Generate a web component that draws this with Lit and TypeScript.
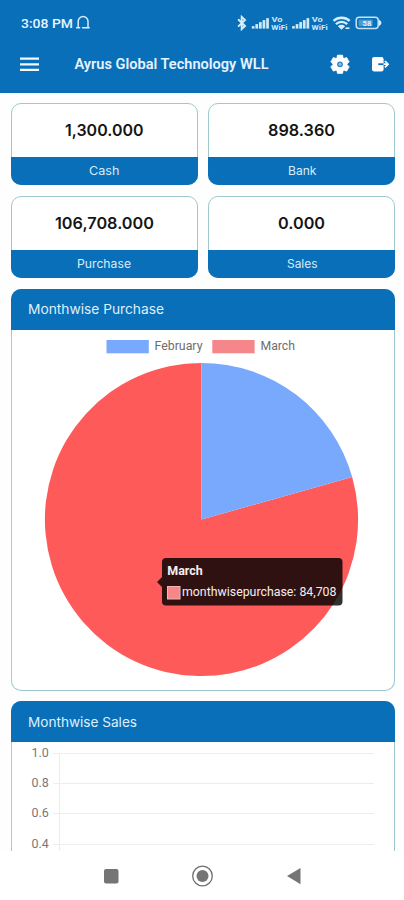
import { LitElement, html, svg, css } from "lit";
import { customElement, property } from "lit/decorators.js";

const BLUE = css`#0a6fb9`;

const fitted = (
  text: string, x: number, y: number, width: number, cls: string,
) => svg`<text class=${cls} x=${x} y=${y} textLength=${width} lengthAdjust="spacingAndGlyphs">${text}</text>`;

const textStyles = css`
  svg { display: block; flex: none; overflow: visible; }
  text { white-space: pre; }
`;

@customElement("status-bar")
export class StatusBar extends LitElement {
  static styles = [textStyles, css`
    :host { display: flex; height: 38px; }
    .time { font: 500 13.4px Roboto, sans-serif; fill: #e9f5ff; }
    .tiny { font: 700 8px Roboto, sans-serif; fill: #cfe9fa; }
    .level { font: 700 8px Roboto, sans-serif; fill: #e2f3fd; }
  `];

  private signal(x: number) {
    return svg`${[2.5, 4.5, 6.5, 8.5, 10.5].map((h, i) =>
      svg`<rect x=${x + i * 3.6} y=${28.6 - h} width="2.7" height=${h} fill="#d0eafa" />`)}
      ${fitted("Vo", x + 19.7, 22.3, 11, "tiny")}
      ${fitted("WiFi", x + 19.5, 30, 16, "tiny")}`;
  }

  render() {
    return html`<svg width="404" height="38" viewBox="0 0 404 38">
      ${fitted("3:08 PM", 21, 28.3, 52, "time")}
      <g fill="none" stroke="#d8eefb" stroke-width="1.5" stroke-linecap="round">
        <path d="M76.6 27.8h3M78.2 27.4v-6a4.9 4.9 0 0 1 9.8 0v6M82.6 27.8h6.6" />
        <path d="M238.6 19.8l6.4 6.2-3.3 3V16.9l3.3 3-6.4 6.2" stroke-width="1.9" />
      </g>
      ${this.signal(251.8)}
      ${this.signal(292.1)}
      <g fill="none" stroke="#d8eefb" stroke-width="2.3">
        <path d="M333.5 20.9a12 12 0 0 1 16.2 0M336 24.1a8 8 0 0 1 11.2 0" />
      </g>
      <path d="M337.9 26.2a5.2 5.2 0 0 1 7.2 0l-3.6 3.5z" fill="#d8eefb" />
      <path d="M345.5 28.2h4" stroke="#d8eefb" stroke-width="1.6" />
      <rect x="356.2" y="17.3" width="22" height="11.2" rx="3" fill="none" stroke="#c4e3f6" stroke-width="1.5" />
      <rect x="358.6" y="19.5" width="14" height="6.8" rx="1" fill="#4b9bd2" />
      <path d="M379 19.4q5 3.4 0 6.8z" fill="#d8eefb" />
      ${fitted("58", 362.5, 25.9, 9, "level")}
    </svg>`;
  }
}

@customElement("title-bar")
export class TitleBar extends LitElement {
  static styles = [textStyles, css`
    :host { display: flex; height: 55px; }
    .title { font: 600 15px Roboto, sans-serif; fill: #e6f4ff; }
  `];

  render() {
    const teeth = [0, 60, 120, 180, 240, 300];
    return html`<svg width="404" height="55" viewBox="0 38 404 55">
      <path d="M20 58.7h19M20 64.3h19M20 69.9h19" stroke="#f1f9ff" stroke-width="2.3" />
      ${fitted("Ayrus Global Technology WLL", 74.5, 69, 194, "title")}
      <g transform="translate(340 64.3)" fill="#fff">
        ${teeth.map((a) => svg`<path transform="rotate(${a})" d="M-3.3-5.5l.7-3.7h5.2l.7 3.7z" stroke="#fff" stroke-width=".6" stroke-linejoin="round" />`)}
        <circle r="7.2" />
        <circle r="2.9" fill="#2f86c5" />
        <circle r="1.5" fill="#8fc0e3" />
      </g>
      <rect x="372" y="57" width="11.6" height="14.4" rx="2.2" fill="#fff" />
      <path d="M378.3 64.2h5.4" stroke="#0a6fb9" stroke-width="1.8" />
      <path d="M383.6 64.2h4.4M384.9 61l3.2 3.2-3.2 3.2" fill="none" stroke="#fff" stroke-width="1.7" />
    </svg>`;
  }
}

@customElement("stat-card")
export class StatCard extends LitElement {
  @property() value = "";
  @property() label = "";
  @property({ type: Number }) valueWidth = 0;
  @property({ type: Number }) labelWidth = 0;

  static styles = [textStyles, css`
    :host {
      display: flex; flex-direction: column; box-sizing: border-box; height: 82.5px;
      border: 1px solid #9fc9cd; border-radius: 10px; background: #fff;
    }
    .figure { flex: 1; display: flex; align-items: center; justify-content: center; }
    .caption {
      height: 28.5px; display: flex; align-items: center; justify-content: center;
      background: ${BLUE}; margin: 0 -1px -1px; border-radius: 0 0 10px 10px;
    }
    .value { font: 600 16.3px Inter, sans-serif; fill: #151515; }
    .label { font: 400 11.5px Inter, sans-serif; fill: #d8ecf9; }
  `];

  render() {
    return html`
      <div class="figure"><svg width=${this.valueWidth} height="22">${fitted(this.value, 0, 17, this.valueWidth, "value")}</svg></div>
      <div class="caption"><svg width=${this.labelWidth} height="18">${fitted(this.label, 0, 13.2, this.labelWidth, "label")}</svg></div>`;
  }
}

@customElement("chart-panel")
export class ChartPanel extends LitElement {
  @property() heading = "";
  @property({ type: Number }) headingWidth = 0;

  static styles = [textStyles, css`
    :host {
      display: block; box-sizing: border-box; background: #fff;
      border: 1px solid #9cc6cc; border-left-color: #a3c9dd; border-radius: 10px;
    }
    .head {
      height: 41px; margin: -1px -1px 0; padding-left: 17px; display: flex; align-items: center;
      background: ${BLUE}; border-radius: 10px 10px 0 0;
    }
    .heading { font: 400 13.3px Inter, sans-serif; fill: #dff0fb; }
  `];

  render() {
    return html`
      <div class="head"><svg width=${this.headingWidth + 2} height="20">${fitted(this.heading, 0, 14.8, this.headingWidth, "heading")}</svg></div>
      <slot></slot>`;
  }
}

@customElement("purchase-pie")
export class PurchasePie extends LitElement {
  static styles = [textStyles, css`
    :host { display: block; height: 360px; }
    .legend { font: 400 12px Roboto, sans-serif; fill: #6d6d6d; }
    .tip-title { font: 700 12px Roboto, sans-serif; fill: #f6eeee; }
    .tip { font: 400 12px Roboto, sans-serif; fill: #f6eeee; }
  `];

  render() {
    const february = 22000, march = 84708;
    const angle = (february / (february + march)) * 2 * Math.PI;
    const cx = 201.5, cy = 519.5, r = 156.6;
    const ex = cx + r * Math.sin(angle), ey = cy - r * Math.cos(angle);
    return html`<svg width="382" height="360" viewBox="12 330 382 360">
      <rect x="106.5" y="340" width="42.3" height="13.3" fill="#78a9fd" />
      ${fitted("February", 154.5, 350.3, 48, "legend")}
      <rect x="212.3" y="340" width="42.3" height="13.3" fill="#f58689" />
      ${fitted("March", 260.5, 350.3, 34.5, "legend")}
      <path d="M${cx} ${cy}V${cy - r}A${r} ${r} 0 1 0 ${ex} ${ey}Z" fill="#ff5a5a" />
      <path d="M${cx} ${cy}V${cy - r}A${r} ${r} 0 0 1 ${ex} ${ey}Z" fill="#78a9fd" />
      <path d="M166 558h172.500a4 4 0 0 1 4 4v39.500a4 4 0 0 1-4 4H166a4 4 0 0 1-4-4V587l-5-5 5-5v-15a4 4 0 0 1 4-4z" fill="#000" fill-opacity=".81" />
      ${fitted("March", 167.3, 575.3, 35.5, "tip-title")}
      <rect x="167.5" y="586.5" width="12.5" height="12.5" fill="#f58689" stroke="#f6b3b3" />
      ${fitted("monthwisepurchase: 84,708", 182, 596.3, 154.5, "tip")}
    </svg>`;
  }
}

@customElement("sales-chart")
export class SalesChart extends LitElement {
  static styles = [textStyles, css`
    :host { display: block; }
    .tick { font: 400 12px Roboto, sans-serif; fill: #777; }
  `];

  render() {
    const ticks = [["1.0", 753.5], ["0.8", 783.5], ["0.6", 813.5], ["0.4", 844.5]] as const;
    return html`<svg width="382" height="160" viewBox="12 742 382 160">
      <path d="M59.5 753V902" stroke="#ececec" />
      ${ticks.map(([label, y]) => svg`
        <path d="M53 ${y}H374" stroke="#ededed" />
        ${fitted(label, 31.5, y + 3.6, 17.3, "tick")}`)}
    </svg>`;
  }
}

@customElement("app-root")
export class AppRoot extends LitElement {
  static styles = css`
    :host { display: flex; flex-direction: column; height: 900px; width: 404px; background: #fefefe; overflow: hidden; }
    .top { flex: none; height: 93px; background: ${BLUE}; }
    .content {
      flex: 1; min-height: 0; overflow: hidden; box-sizing: border-box;
      padding: 9.7px 8.6px 0 10.8px; display: flex; flex-direction: column; gap: 10.5px;
    }
    .stats { flex: none; display: grid; grid-template-columns: 1fr 1fr; gap: 10.5px 10px; }
    .purchase { flex: none; height: 402px; }
    .sales { flex: none; height: 202px; }
    .nav { flex: none; height: 49px; background: #fff; }
    .nav svg { display: block; }
  `;

  render() {
    return html`
      <header class="top"><status-bar></status-bar><title-bar></title-bar></header>
      <main class="content">
        <section class="stats">
          <stat-card value="1,300.000" valueWidth="78.5" label="Cash" labelWidth="30.5"></stat-card>
          <stat-card value="898.360" valueWidth="67" label="Bank" labelWidth="28.5"></stat-card>
          <stat-card value="106,708.000" valueWidth="99" label="Purchase" labelWidth="54"></stat-card>
          <stat-card value="0.000" valueWidth="47" label="Sales" labelWidth="30.5"></stat-card>
        </section>
        <chart-panel class="purchase" heading="Monthwise Purchase" headingWidth="136">
          <purchase-pie></purchase-pie>
        </chart-panel>
        <chart-panel class="sales" heading="Monthwise Sales" headingWidth="109">
          <sales-chart></sales-chart>
        </chart-panel>
      </main>
      <nav class="nav">
        <svg width="404" height="49" viewBox="0 851 404 49">
          <rect x="104" y="869" width="14.5" height="14.5" rx="2" fill="#757575" />
          <circle cx="202.5" cy="876" r="9.8" fill="none" stroke="#6e6e6e" stroke-width="1.3" />
          <circle cx="202.5" cy="876" r="6" fill="#757575" />
          <path d="M287 876l13.5-8v16.2z" fill="#757575" />
        </svg>
      </nav>`;
  }
}
